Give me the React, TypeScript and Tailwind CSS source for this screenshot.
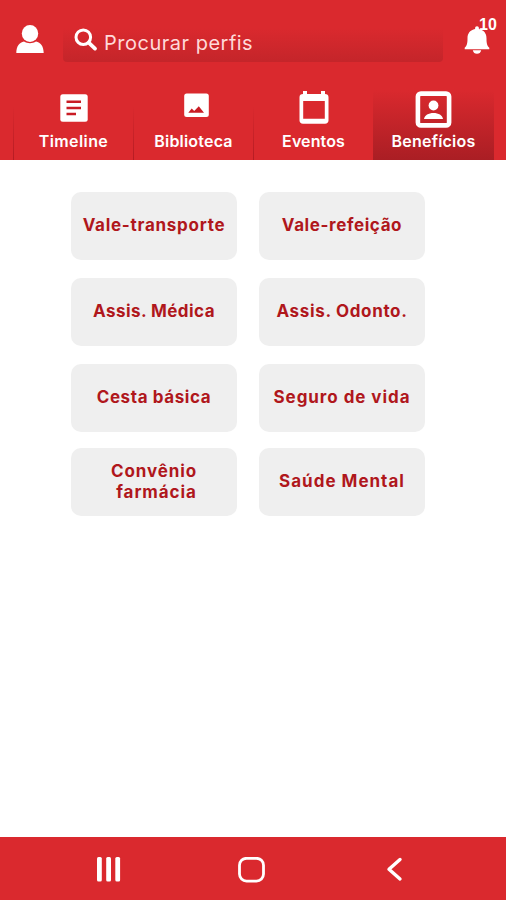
import type { ReactNode } from "react"

const benefits = [
  { id: 1, lines: ["Vale-transporte"], tracking: "tracking-[0.73px]" },
  { id: 2, lines: ["Vale-refeição"], tracking: "tracking-[0.6px]" },
  { id: 3, lines: ["Assis. Médica"], tracking: "tracking-[0.45px]" },
  { id: 4, lines: ["Assis. Odonto."], tracking: "tracking-[0.66px]" },
  { id: 5, lines: ["Cesta básica"], tracking: "tracking-[0.6px]" },
  { id: 6, lines: ["Seguro de vida"], tracking: "tracking-[0.94px]" },
  { id: 7, lines: ["Convênio", "farmácia"], tracking: "tracking-[0.9px]" },
  { id: 8, lines: ["Saúde Mental"], tracking: "tracking-[1px]" },
]

function UserIcon() {
  return (
    <svg width="28" height="29" viewBox="0 0 28 29" fill="white">
      <ellipse cx="14" cy="8.5" rx="8.2" ry="8.4" />
      <path d="M0.3 28C0.3 21 3.5 17.300 8 16.400c3.600 2.300 8.400 2.300 12 0 4.500.9 7.700 4.600 7.700 11.600Z" />
    </svg>
  )
}

function SearchIcon() {
  return (
    <svg width="24" height="24" viewBox="0 0 24 24" fill="none" stroke="white">
      <circle cx="9.300" cy="9.200" r="7.300" strokeWidth="3" />
      <path d="M14.700 14.700 21 20.600" strokeWidth="3.800" strokeLinecap="round" />
    </svg>
  )
}

function BellIcon() {
  return (
    <svg width="26" height="30" viewBox="0 0 26 30" fill="white">
      <path d="M13 1.200c1.200 0 1.900.8 1.900 2v.9c4.800.9 7.600 4.300 7.600 9.300 0 4.800.6 7.300 2.800 9.300v1.500H.7v-1.500c2.200-2 2.800-4.500 2.800-9.300 0-5 2.800-8.400 7.600-9.300v-.9c0-1.200.7-2 1.900-2Z" />
      <path d="M8.800 25.300h8.400c-.5 2.400-2 3.500-4.200 3.500s-3.700-1.100-4.200-3.500Z" />
    </svg>
  )
}

function TimelineIcon() {
  return (
    <svg width="28" height="28" viewBox="0 0 28 28">
      <rect x="0.300" y="0.300" width="27.400" height="27.400" rx="2.500" fill="white" />
      <path d="M6.500 7.800h14.500M6.500 14h14.500M6.500 20h9.500" stroke="#c91c24" strokeWidth="2.400" />
    </svg>
  )
}

function LibraryIcon() {
  return (
    <svg width="25" height="25" viewBox="0 0 25 25">
      <rect x="0.200" y="0.500" width="24.600" height="23.500" rx="2.500" fill="white" />
      <path d="M4.300 19.800 7.700 15.500l2.500 2.400 4.600-4.600 5.200 6.500Z" fill="#c91c24" />
    </svg>
  )
}

function CalendarIcon() {
  return (
    <svg width="30" height="35" viewBox="0 0 30 35" fill="white">
      <path
        fillRule="evenodd"
        d="M4 1h4v3h14V1h4v3c2.200 0 3.500 1.200 3.500 3.200v23.300c0 2-1.300 3.200-3.500 3.200H4c-2.200 0-3.500-1.200-3.500-3.200V7.200C.5 5.200 1.800 4 4 4ZM4.200 11v17.800h21.600V11Z"
      />
    </svg>
  )
}

function BadgeIcon() {
  return (
    <svg width="37" height="37" viewBox="0 0 37 37">
      <rect x="2.900" y="2.600" width="31.200" height="31.800" rx="3" fill="none" stroke="white" strokeWidth="4.600" />
      <circle cx="18.500" cy="14.500" r="4.900" fill="white" />
      <path d="M9 28c.5-3.700 4.500-6 9.500-6s9 2.300 9.500 6Z" fill="white" />
    </svg>
  )
}

type TabProps = {
  label: string
  icon: ReactNode
  labelClass: string
  iconClass?: string
  active?: boolean
}

function Tab({ label, icon, labelClass, iconClass = "", active = false }: TabProps) {
  return (
    <button className="flex h-[78px] w-[120px] shrink-0 last:w-[121px]">
      {!active && <span className="h-full w-px bg-linear-to-b from-transparent from-30% to-[#b51c23]" />}
      <span
        className={
          active
            ? "flex h-full flex-1 flex-col items-center bg-linear-to-b from-[#da292e] from-10% to-[#aa1e24]"
            : "flex h-full flex-1 flex-col items-center"
        }
      >
        <span className={`flex h-[49px] items-center justify-center ${iconClass}`}>{icon}</span>
        <span className={`text-[16px] leading-5 font-semibold whitespace-nowrap ${labelClass}`}>{label}</span>
      </span>
    </button>
  )
}

export default function App() {
  return (
    <div className="flex h-[900px] w-[506px] flex-col overflow-hidden bg-white font-['Inter',sans-serif]">
      <header className="h-40 bg-[#da292e] text-white">
        <div className="flex h-[82px] items-start">
          <div className="ml-4 mt-[25px]">
            <UserIcon />
          </div>
          <div className="ml-[19px] mt-5 flex h-[42px] w-[380px] rounded bg-linear-to-b from-transparent from-20% to-[#c4252a] pl-[11px]">
            <div className="mt-2">
              <SearchIcon />
            </div>
            <span className="ml-[6px] mt-2 text-[20px] leading-[30px] tracking-[0.5px] whitespace-nowrap text-[#ffd9d9]">
              Procurar perfis
            </span>
          </div>
          <div className="relative ml-[21px] mt-[25px]">
            <BellIcon />
            <span className="absolute -top-[10px] left-[15px] font-['Liberation_Sans',sans-serif] text-[16px] leading-5 font-bold">
              10
            </span>
          </div>
        </div>
        <nav className="flex pl-[13px]">
          <Tab label="Timeline" icon={<TimelineIcon />} labelClass="tracking-[0.4px]" iconClass="pt-[2px]" />
          <Tab label="Biblioteca" icon={<LibraryIcon />} labelClass="tracking-[0.2px]" iconClass="pb-[2px] pl-[6px]" />
          <Tab label="Eventos" icon={<CalendarIcon />} labelClass="tracking-[0.1px]" iconClass="pt-[2px]" />
          <Tab label="Benefícios" icon={<BadgeIcon />} labelClass="tracking-[0.2px]" iconClass="pt-[6px]" active />
        </nav>
      </header>

      <main className="flex-1 pl-[71px] pt-8">
        <div className="grid w-[354px] grid-cols-[166px_166px] grid-rows-[86px_86px_84px_68px] justify-between">
          {benefits.map((benefit) => (
            <button
              key={benefit.id}
              className="flex h-[68px] flex-col items-center justify-center rounded-[10px] bg-[#efefef] pb-[1px] text-[#b0171c]"
            >
              {benefit.lines.map((line, i) => (
                <span
                  key={line}
                  className={`text-[17px] leading-[21px] font-bold whitespace-nowrap ${benefit.tracking} ${i > 0 ? "pl-[5px]" : ""}`}
                >
                  {line}
                </span>
              ))}
            </button>
          ))}
        </div>
      </main>

      <footer className="flex h-[63px] items-start bg-[#da292e]">
        <svg className="ml-[97px] mt-5" width="24" height="25" viewBox="0 0 24 25" fill="white">
          <rect x="0" y="0" width="4.800" height="24.500" rx="1.500" />
          <rect x="9.200" y="0" width="4.800" height="24.500" rx="1.500" />
          <rect x="18.300" y="0" width="4.800" height="24.500" rx="1.500" />
        </svg>
        <svg className="ml-[117px] mt-5" width="27" height="26" viewBox="0 0 27 26" fill="none">
          <rect x="1.500" y="1.300" width="24" height="22.800" rx="7" stroke="white" strokeWidth="2.800" />
        </svg>
        <svg className="ml-[121px] mt-5" width="18" height="25" viewBox="0 0 18 25" fill="none">
          <path d="M14 2.500 3 12.300 14 22" stroke="white" strokeWidth="3.400" strokeLinecap="round" strokeLinejoin="round" />
        </svg>
      </footer>
    </div>
  )
}
